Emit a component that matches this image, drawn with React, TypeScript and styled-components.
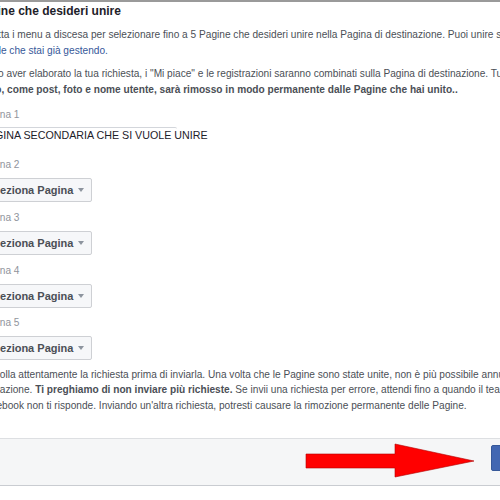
import styled, { createGlobalStyle } from 'styled-components';

const FONT = '"Liberation Sans", Arial, Helvetica, sans-serif';

const GlobalStyle = createGlobalStyle`
  html, body {
    margin: 0;
    padding: 0;
    background: #fff;
  }
  body {
    font-family: ${FONT};
  }
`;

const Viewport = styled.div`
  position: relative;
  width: 500px;
  height: 500px;
  overflow: hidden;
`;

// the dialog is wider than the crop; its left padding lies outside the picture
const Dialog = styled.div`
  width: 598px;
  margin-left: -20.5px;
  border-top: 2px solid #9a9a9a;
  background: #fff;
`;

const Title = styled.h2`
  margin: 0 0 0 -4px;
  font-size: 12px;
  font-weight: bold;
  line-height: 19px;
  color: #1d2129;
  white-space: nowrap;
`;

const Body = styled.div`
  padding-top: 6.1px;
  font-size: 10.15px;
  line-height: 15.4px;
  color: #4b4f56;
`;

const Paragraph = styled.p`
  margin: 0 0 8.2px;
`;

const Line = styled.span<{ $bold?: boolean; $link?: boolean; $shift?: number }>`
  display: block;
  white-space: nowrap;
  margin-left: ${p => p.$shift ?? 0}px;
  font-weight: ${p => (p.$bold ? 'bold' : 'normal')};
  color: ${p => (p.$link ? '#365899' : 'inherit')};
`;

const FieldList = styled.div`
  margin-top: 9.6px;
  display: flex;
  flex-direction: column;
`;

const Field = styled.div`
  display: flex;
  flex-direction: column;
  align-items: flex-start;
  margin-bottom: 7.9px;

  &:last-child {
    margin-bottom: 6.7px;
  }
`;

const FieldLabel = styled.label`
  color: #90949c;
  margin-bottom: 5.5px;
`;

const TextBox = styled.div`
  box-sizing: border-box;
  width: 197px;
  height: 21.8px;
  padding-left: 2px;
  border-top: 1px solid #d3d6db;
  border-radius: 2px;
  color: #1d2129;
  font-size: 10.7px;
  white-space: nowrap;
`;

const SelectButton = styled.button`
  display: inline-flex;
  align-items: center;
  gap: 5px;
  box-sizing: border-box;
  height: 24px;
  padding: 0 7px 0 3px;
  border: 1px solid #ced0d4;
  border-radius: 2px;
  background: #f6f7f9;
  color: #4b4f56;
  font-family: ${FONT};
  font-size: 11px;
  font-weight: bold;
`;

const Caret = styled.span`
  width: 0;
  height: 0;
  border-left: 3.5px solid transparent;
  border-right: 3.5px solid transparent;
  border-top: 4px solid #8d949e;
`;

const Footer = styled.div`
  margin-top: 24.7px;
  height: 40px;
  display: flex;
  justify-content: flex-end;
  align-items: flex-start;
  padding: 6px 12px 0;
  background: #f5f6f7;
  border-top: 1px solid #dddfe2;
  border-bottom: 1px solid #c9ccd1;
`;

const SubmitButton = styled.button`
  width: 75px;
  height: 26px;
  border: 1px solid #365899;
  border-radius: 2px;
  background: #4267b2;
  color: #fff;
  font-family: ${FONT};
  font-size: 12px;
  font-weight: bold;
`;

const Arrow = styled.svg`
  position: absolute;
  left: 305px;
  top: 443px;
`;

const pages = [2, 3, 4, 5];

function App() {
  return (
    <Viewport>
      <GlobalStyle />
      <Dialog>
        <Title>Pagine che desideri unire</Title>
        <Body>
          <Paragraph>
            <Line>Sfrutta i menu a discesa per selezionare fino a 5 Pagine che desideri unire nella Pagina di destinazione. Puoi unire solo</Line>
            <Line $link>quelle che stai già gestendo.</Line>
          </Paragraph>
          <Paragraph>
            <Line>Dopo aver elaborato la tua richiesta, i "Mi piace" e le registrazioni saranno combinati sulla Pagina di destinazione. Tutto l'</Line>
            <Line $bold>altro, come post, foto e nome utente, sarà rimosso in modo permanente dalle Pagine che hai unito..</Line>
          </Paragraph>
          <FieldList>
            <Field>
              <FieldLabel>Pagina 1</FieldLabel>
              <TextBox>PAGINA SECONDARIA CHE SI VUOLE UNIRE</TextBox>
            </Field>
            {pages.map(n => (
              <Field key={n}>
                <FieldLabel>Pagina {n}</FieldLabel>
                <SelectButton>
                  Seleziona Pagina
                  <Caret />
                </SelectButton>
              </Field>
            ))}
          </FieldList>
          <Paragraph>
            <Line $shift={-4.5}>Controlla attentamente la richiesta prima di inviarla. Una volta che le Pagine sono state unite, non è più possibile annullare l'</Line>
            <Line>operazione. <b>Ti preghiamo di non inviare più richieste.</b> Se invii una richiesta per errore, attendi fino a quando il team di</Line>
            <Line>Facebook non ti risponde. Inviando un'altra richiesta, potresti causare la rimozione permanente delle Pagine.</Line>
          </Paragraph>
        </Body>
        <Footer>
          <SubmitButton>Invia</SubmitButton>
        </Footer>
      </Dialog>
      <Arrow width="172" height="36" viewBox="0 0 172 36">
        <polygon
          points="1,11 90,11 90,1 169,18 90,34 90,25 1,25"
          fill="#ff0000"
          stroke="#b00000"
          strokeWidth="0.6"
        />
      </Arrow>
    </Viewport>
  );
}

export default App;
